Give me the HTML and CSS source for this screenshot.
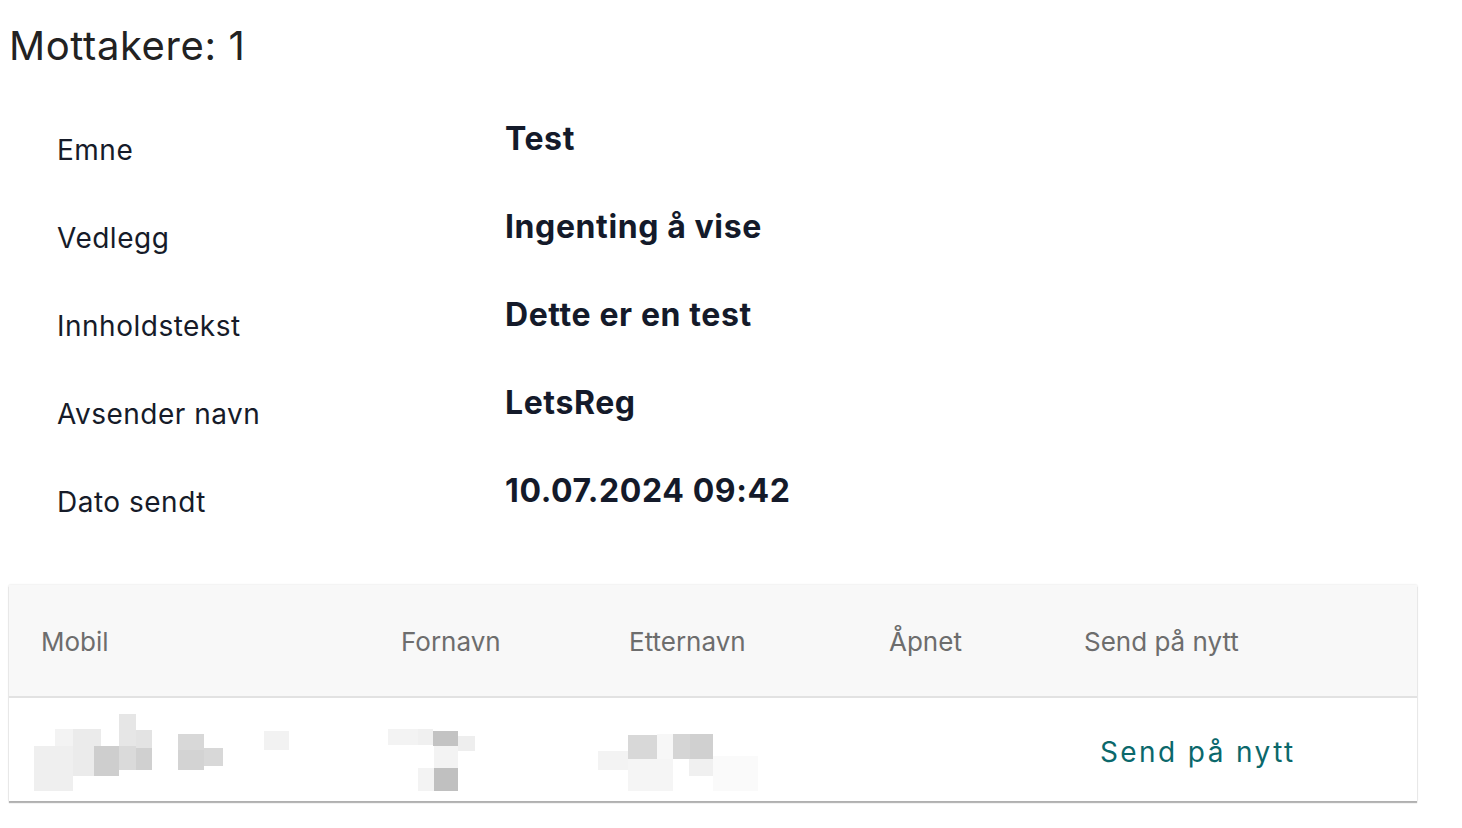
FILE: index.html
```html
<!DOCTYPE html>
<html lang="no">
<head>
<meta charset="utf-8">
<title>Mottakere</title>
<link rel="stylesheet" href="styles.css">
</head>
<body>
<main class="page">
  <h2 class="title">Mottakere: 1</h2>
  <section class="details">
    <div class="row"><div class="label">Emne</div><div class="value">Test</div></div>
    <div class="row"><div class="label">Vedlegg</div><div class="value">Ingenting å vise</div></div>
    <div class="row"><div class="label">Innholdstekst</div><div class="value">Dette er en test</div></div>
    <div class="row"><div class="label">Avsender navn</div><div class="value">LetsReg</div></div>
    <div class="row"><div class="label">Dato sendt</div><div class="value">10.07.2024 09:42</div></div>
  </section>
  <section class="table">
    <div class="thead">
      <div class="th">Mobil</div>
      <div class="th">Fornavn</div>
      <div class="th">Etternavn</div>
      <div class="th">Åpnet</div>
      <div class="th">Send på nytt</div>
    </div>
    <div class="trow">
      <div class="td"><svg class="blur" width="360" height="103" viewBox="0 0 360 103">
        <rect x="25" y="48" width="39" height="45" fill="#efefef"/>
        <rect x="46" y="31" width="18" height="17" fill="#f3f3f3"/>
        <rect x="64" y="31" width="28" height="47" fill="#ebebeb"/>
        <rect x="85" y="48" width="25" height="30" fill="#cecece"/>
        <rect x="110" y="16" width="17" height="32" fill="#e6e6e6"/>
        <rect x="110" y="48" width="17" height="24" fill="#dadada"/>
        <rect x="127" y="32" width="16" height="18" fill="#e3e3e3"/>
        <rect x="127" y="50" width="16" height="22" fill="#d0d0d0"/>
        <rect x="169" y="36" width="26" height="16" fill="#d8d8d8"/>
        <rect x="169" y="52" width="26" height="20" fill="#d3d3d3"/>
        <rect x="195" y="50" width="19" height="18" fill="#d8d8d8"/>
        <rect x="255" y="33" width="25" height="19" fill="#f2f2f2"/>
      </svg></div>
      <div class="td"><svg class="blur" width="228" height="103" viewBox="0 0 228 103">
        <rect x="19" y="31" width="30" height="16" fill="#f3f3f3"/>
        <rect x="49" y="31" width="15" height="16" fill="#f0f0f0"/>
        <rect x="64" y="33" width="25" height="15" fill="#c3c3c3"/>
        <rect x="89" y="38" width="17" height="15" fill="#eeeeee"/>
        <rect x="65" y="48" width="24" height="22" fill="#f3f3f3"/>
        <rect x="49" y="70" width="16" height="23" fill="#f3f3f3"/>
        <rect x="65" y="70" width="24" height="23" fill="#c0c0c0"/>
      </svg></div>
      <div class="td"><svg class="blur" width="260" height="103" viewBox="0 0 260 103">
        <rect x="1" y="53" width="30" height="19" fill="#f3f3f3"/>
        <rect x="31" y="61" width="45" height="32" fill="#f5f5f5"/>
        <rect x="31" y="37" width="29" height="24" fill="#d8d8d8"/>
        <rect x="60" y="36" width="16" height="25" fill="#f7f7f7"/>
        <rect x="76" y="36" width="17" height="25" fill="#d5d5d5"/>
        <rect x="93" y="36" width="23" height="25" fill="#d0d0d0"/>
        <rect x="92" y="61" width="24" height="17" fill="#f0f0f0"/>
        <rect x="116" y="58" width="45" height="35" fill="#fafafa"/>
      </svg></div>
      <div class="td"></div>
      <div class="td action"><button class="resend" type="button">Send på nytt</button></div>
    </div>
  </section>
</main>
</body>
</html>
```
FILE: styles.css
```css
* { box-sizing: border-box; }
html, body { margin: 0; padding: 0; background: #ffffff; }
body { font-family: Inter, "Noto Sans", "Liberation Sans", sans-serif; }

.page { padding: 0 45px 26px 9px; }

.title {
  margin: 0;
  padding-top: 22px;
  height: 106px;
  font-size: 40px;
  line-height: 48px;
  font-weight: 400;
  color: #222222;
  letter-spacing: 0.6px;
}

.details { display: flex; flex-direction: column; }
.row {
  display: grid;
  grid-template-columns: 496px 1fr;
  height: 88px;
  align-items: center;
}
.label {
  padding-left: 48px;
  font-size: 28px;
  color: #161b29;
  letter-spacing: 0.5px;
}
.value {
  margin-bottom: 24px;
  font-size: 32px;
  font-weight: 700;
  color: #141a2a;
  letter-spacing: 0.6px;
}

.table {
  margin-top: 39px;
  width: 1408px;
  background: #ffffff;
  box-shadow: 0 2px 1px 0 rgba(0,0,0,0.28), 0 0 2px 0 rgba(0,0,0,0.14);
}
.thead, .trow {
  display: grid;
  grid-template-columns: 360px 228px 260px 195px 1fr;
}
.thead {
  height: 113px;
  background: #f8f8f8;
  border-bottom: 2px solid #e2e2e2;
  align-items: center;
}
.th {
  padding-left: 32px;
  padding-top: 2px;
  font-size: 26px;
  color: #6d6d6d;
}
.trow { height: 103px; }
.td { height: 103px; }
.blur { display: block; }
.action { display: flex; align-items: center; padding-left: 32px; padding-top: 5px; }
.resend {
  background: none;
  border: 0;
  padding: 0 0 0 16px;
  font-family: inherit;
  font-size: 28px;
  color: #0b686b;
  letter-spacing: 2.4px;
  cursor: pointer;
}
```
